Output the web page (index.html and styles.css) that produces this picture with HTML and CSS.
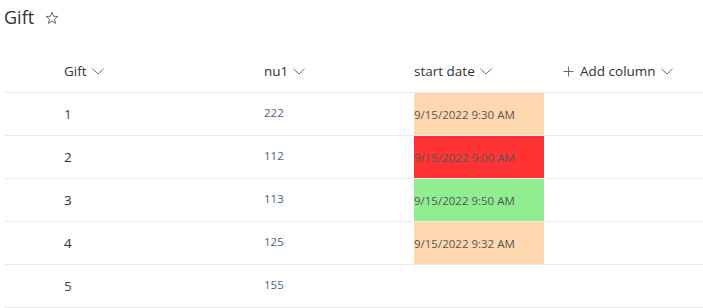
FILE: index.html
```html
<!DOCTYPE html>
<html>
<head>
<meta charset="utf-8">
<link rel="stylesheet" href="styles.css">
</head>
<body>
<div class="title-bar">
  <span class="title">Gift</span>
  <svg class="star" width="14" height="14" viewBox="0 0 14 14"><path d="M7 1.2 L8.6 5.3 L12.9 5.4 L9.5 8.1 L10.7 12.4 L7 9.9 L3.3 12.4 L4.5 8.1 L1.1 5.4 L5.4 5.3 Z" fill="none" stroke="#605e5c" stroke-width="0.9" stroke-linejoin="round"/></svg>
</div>
<div class="list">
  <div class="row head">
    <div class="cell"></div>
    <div class="cell"><span class="hname">Gift</span><svg class="chev" width="12" height="7" viewBox="0 0 12 7"><path d="M0.5 0.8 L6 6 L11.5 0.8" fill="none" stroke="#605e5c" stroke-width="0.9"/></svg></div>
    <div class="cell"><span class="hname">nu1</span><svg class="chev" width="12" height="7" viewBox="0 0 12 7"><path d="M0.5 0.8 L6 6 L11.5 0.8" fill="none" stroke="#605e5c" stroke-width="0.9"/></svg></div>
    <div class="cell"><span class="hname">start date</span><svg class="chev" width="12" height="7" viewBox="0 0 12 7"><path d="M0.5 0.8 L6 6 L11.5 0.8" fill="none" stroke="#605e5c" stroke-width="0.9"/></svg></div>
    <div class="cell"><svg class="plus" width="11" height="11" viewBox="0 0 11 11"><path d="M5.5 0.5 V10.5 M0.5 5.5 H10.5" stroke="#605e5c" stroke-width="0.9"/></svg><span class="hname">Add column</span><svg class="chev" width="12" height="7" viewBox="0 0 12 7"><path d="M0.5 0.8 L6 6 L11.5 0.8" fill="none" stroke="#605e5c" stroke-width="0.9"/></svg></div>
  </div>
  <div class="row">
    <div class="cell"></div>
    <div class="cell gift visited">1</div>
    <div class="cell num">222</div>
    <div class="cell"><div class="date peach">9/15/2022 9:30 AM</div></div>
    <div class="cell"></div>
  </div>
  <div class="row">
    <div class="cell"></div>
    <div class="cell gift">2</div>
    <div class="cell num">112</div>
    <div class="cell"><div class="date red">9/15/2022 9:00 AM</div></div>
    <div class="cell"></div>
  </div>
  <div class="row">
    <div class="cell"></div>
    <div class="cell gift">3</div>
    <div class="cell num">113</div>
    <div class="cell"><div class="date green">9/15/2022 9:50 AM</div></div>
    <div class="cell"></div>
  </div>
  <div class="row">
    <div class="cell"></div>
    <div class="cell gift">4</div>
    <div class="cell num">125</div>
    <div class="cell"><div class="date peach">9/15/2022 9:32 AM</div></div>
    <div class="cell"></div>
  </div>
  <div class="row">
    <div class="cell"></div>
    <div class="cell gift link">5</div>
    <div class="cell num">155</div>
    <div class="cell"></div>
    <div class="cell"></div>
  </div>
</div>
</body>
</html>
```
FILE: styles.css
```css
html, body {
  margin: 0;
  padding: 0;
  background: #ffffff;
  font-family: "Segoe UI", "Open Sans", "Noto Sans", sans-serif;
  color: #323130;
}
.title-bar {
  height: 50px;
  display: flex;
  align-items: flex-start;
  padding: 3px 0 0 4px;
  box-sizing: border-box;
  gap: 11px;
}
.title {
  font-size: 18px;
  line-height: 28px;
  color: #323130;
}
.star {
  margin-top: 8px;
}
.list {
  margin-left: 4px;
}
.row {
  display: grid;
  grid-template-columns: 60px 200px 150px 149px 1fr;
  height: 43px;
  border-bottom: 1px solid #edebe9;
  box-sizing: border-box;
}
.cell {
  display: flex;
  align-items: center;
  min-width: 0;
}
.head .cell {
  font-size: 13.5px;
  color: #323130;
  gap: 5px;
}
.head .cell .plus {
  margin-right: 1px;
}
.chev {
  margin-top: 1px;
}
.gift {
  font-size: 13.5px;
  color: #323130;
}
.gift.visited {
  color: #5c2d91;
}
.gift.link {
  color: #2f4966;
}
.num {
  font-size: 11.5px;
  color: #4a6485;
  padding-bottom: 4px;
}
.date {
  width: 130px;
  height: 42px;
  display: flex;
  align-items: center;
  font-size: 11.5px;
  color: #555555;
  white-space: nowrap;
}
.peach { background: #ffd8b0; }
.red { background: #ff3333; }
.green { background: #90ee90; }
```
